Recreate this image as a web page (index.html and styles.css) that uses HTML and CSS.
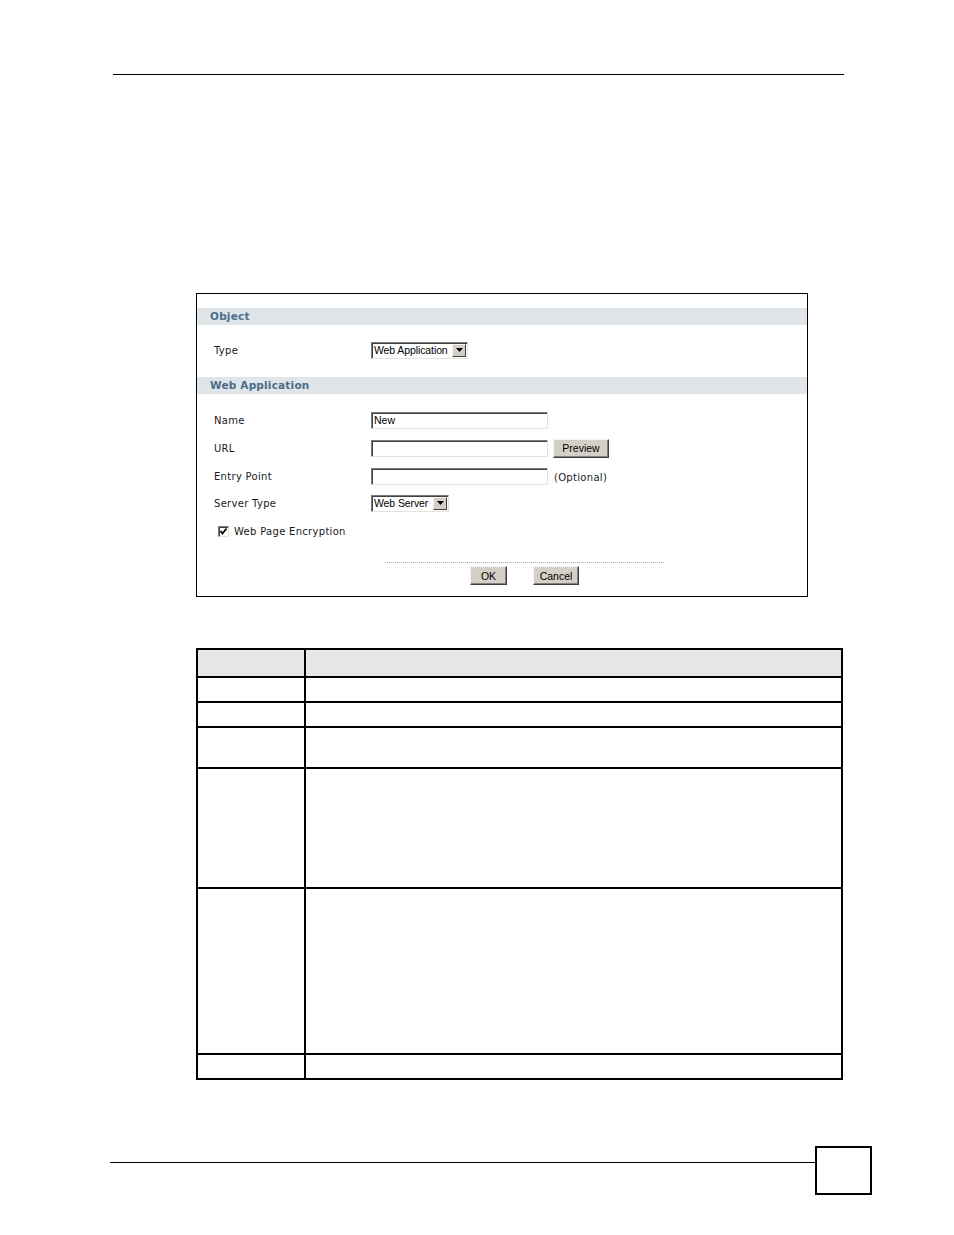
FILE: index.html
```html
<!DOCTYPE html>
<html>
<head>
<meta charset="utf-8">
<link rel="stylesheet" href="styles.css">
</head>
<body>
<div class="page">
  <div class="top-rule"></div>

  <div class="frame">
    <div class="sec-bar">Object</div>
    <div class="row row-type">
      <span class="label">Type</span>
      <span class="select sel-type"><span class="sel-text">Web Application</span><span class="sel-btn"><svg width="7" height="4" viewBox="0 0 7 4"><path d="M0 0H7L3.5 4Z" fill="#000"/></svg></span></span>
    </div>
    <div class="sec-bar sec-web">Web Application</div>
    <div class="row row-name">
      <span class="label">Name</span>
      <span class="input">New</span>
    </div>
    <div class="row row-url">
      <span class="label">URL</span>
      <span class="input"></span>
      <span class="btn btn-preview">Preview</span>
    </div>
    <div class="row row-entry">
      <span class="label">Entry Point</span>
      <span class="input"></span>
      <span class="note">(Optional)</span>
    </div>
    <div class="row row-server">
      <span class="label">Server Type</span>
      <span class="select sel-server"><span class="sel-text">Web Server</span><span class="sel-btn"><svg width="7" height="4" viewBox="0 0 7 4"><path d="M0 0H7L3.5 4Z" fill="#000"/></svg></span></span>
    </div>
    <div class="row row-check">
      <span class="check"><svg width="9" height="9" viewBox="0 0 9 9"><path d="M1.5 4L3.5 6.5L7.5 1.5" fill="none" stroke="#000" stroke-width="1.8"/></svg></span>
      <span class="check-label">Web Page Encryption</span>
    </div>
    <div class="dots"></div>
    <div class="actions">
      <span class="btn btn-ok">OK</span>
      <span class="btn btn-cancel">Cancel</span>
    </div>
  </div>

  <table class="desc">
    <tr class="r-head"><th class="c1"></th><th class="c2"></th></tr>
    <tr class="r-a"><td></td><td></td></tr>
    <tr class="r-b"><td></td><td></td></tr>
    <tr class="r-c"><td></td><td></td></tr>
    <tr class="r-d"><td></td><td></td></tr>
    <tr class="r-e"><td></td><td></td></tr>
    <tr class="r-f"><td></td><td></td></tr>
  </table>

  <div class="footer">
    <div class="foot-rule"></div>
    <div class="page-box"></div>
  </div>
</div>
</body>
</html>
```

FILE: styles.css
```css
html, body {
  margin: 0;
  padding: 0;
  background: #ffffff;
}
.page {
  width: 954px;
  height: 1235px;
  position: relative;
  overflow: hidden;
  padding-top: 74px;
  box-sizing: border-box;
}
.top-rule {
  margin-left: 113px;
  width: 731px;
  height: 1px;
  background: #000;
}
.frame {
  margin-top: 218px;
  margin-left: 196px;
  width: 612px;
  height: 304px;
  box-sizing: border-box;
  border: 1px solid #000;
  padding-top: 14px;
  font-family: "DejaVu Sans", Verdana, sans-serif;
  font-size: 10px;
  color: #1a1a1a;
}
.sec-bar {
  height: 17px;
  line-height: 17px;
  background: #dfe5e9;
  color: #4d6e89;
  font-weight: bold;
  font-size: 10.5px;
  padding-left: 13px;
  letter-spacing: 0.2px;
}
.sec-web {
  margin-top: 18px;
}
.row {
  display: flex;
  align-items: center;
  height: 18px;
  padding-left: 17px;
}
.row-type { margin-top: 16px; }
.row-name { margin-top: 17px; }
.row-url { margin-top: 10px; }
.row-entry { margin-top: 10px; }
.row-server { margin-top: 9px; }
.row-check { margin-top: 10px; padding-left: 21px; }
.label {
  width: 157px;
  letter-spacing: 0.3px;
}
.input {
  box-sizing: border-box;
  width: 177px;
  height: 17px;
  border-style: solid;
  border-width: 1px;
  border-color: #7a7a7a #e4e2dc #e4e2dc #7a7a7a;
  box-shadow: inset 1px 1px 0 #404040;
  background: #fff;
  font-family: "Liberation Sans", Arial, sans-serif;
  font-size: 10.5px;
  line-height: 15px;
  padding-left: 2px;
  color: #000;
}
.select {
  box-sizing: border-box;
  height: 17px;
  display: inline-flex;
  align-items: stretch;
  border-style: solid;
  border-width: 1px;
  border-color: #7a7a7a #e4e2dc #e4e2dc #7a7a7a;
  box-shadow: inset 1px 1px 0 #404040;
  background: #fff;
  font-family: "Liberation Sans", Arial, sans-serif;
  font-size: 10.5px;
  letter-spacing: -0.1px;
  color: #000;
}
.sel-type { width: 97px; }
.sel-server { width: 78px; }
.sel-text {
  flex: 1;
  padding-left: 2px;
  line-height: 15px;
  white-space: nowrap;
  overflow: hidden;
}
.sel-btn {
  width: 14px;
  flex: none;
  margin: 1px 1px 1px 0;
  box-sizing: border-box;
  background: #d4d0c8;
  border-style: solid;
  border-width: 1px;
  border-color: #f4f4f4 #404040 #404040 #f4f4f4;
  display: flex;
  align-items: center;
  justify-content: center;
}
.btn {
  box-sizing: border-box;
  height: 19px;
  display: inline-flex;
  align-items: center;
  justify-content: center;
  background: #d4d0c8;
  border-style: solid;
  border-width: 1px;
  border-color: #f4f4f4 #404040 #404040 #f4f4f4;
  box-shadow: inset -1px -1px 0 #808080;
  font-family: "Liberation Sans", Arial, sans-serif;
  font-size: 10.5px;
  color: #000;
}
.btn-preview {
  width: 56px;
  margin-left: 5px;
}
.note {
  margin-left: 6px;
  letter-spacing: 0.3px;
  padding-top: 3px;
}
.check {
  box-sizing: border-box;
  width: 11px;
  height: 11px;
  border-style: solid;
  border-width: 1px;
  border-color: #7a7a7a #e4e2dc #e4e2dc #7a7a7a;
  box-shadow: inset 1px 1px 0 #404040;
  background: #fff;
  display: flex;
  align-items: center;
  justify-content: center;
}
.check-label {
  margin-left: 5px;
  letter-spacing: 0.3px;
}
.dots {
  margin-top: 22px;
  margin-left: 188px;
  width: 279px;
  height: 0;
  border-top: 1px dotted #a8a8a8;
}
.actions {
  display: flex;
  margin-top: 3px;
  padding-left: 273px;
}
.btn-ok { width: 37px; }
.btn-cancel { width: 46px; margin-left: 26px; }

.desc {
  margin-top: 51px;
  margin-left: 196px;
  width: 647px;
  border-collapse: collapse;
  border: 2px solid #000;
}
.desc th, .desc td {
  border: 2px solid #000;
  padding: 0;
}
.desc th { background: #e6e6e6; }
.desc .c1 { width: 106px; }
.r-head { height: 28px; }
.r-a { height: 25px; }
.r-b { height: 25px; }
.r-c { height: 41px; }
.r-d { height: 120px; }
.r-e { height: 166px; }
.r-f { height: 25px; }

.footer {
  display: flex;
  align-items: flex-start;
  margin-left: 110px;
  margin-top: 66px;
}
.foot-rule {
  width: 705px;
  height: 1px;
  background: #000;
  margin-top: 16px;
}
.page-box {
  width: 57px;
  height: 49px;
  box-sizing: border-box;
  border: 2px solid #000;
}
```
